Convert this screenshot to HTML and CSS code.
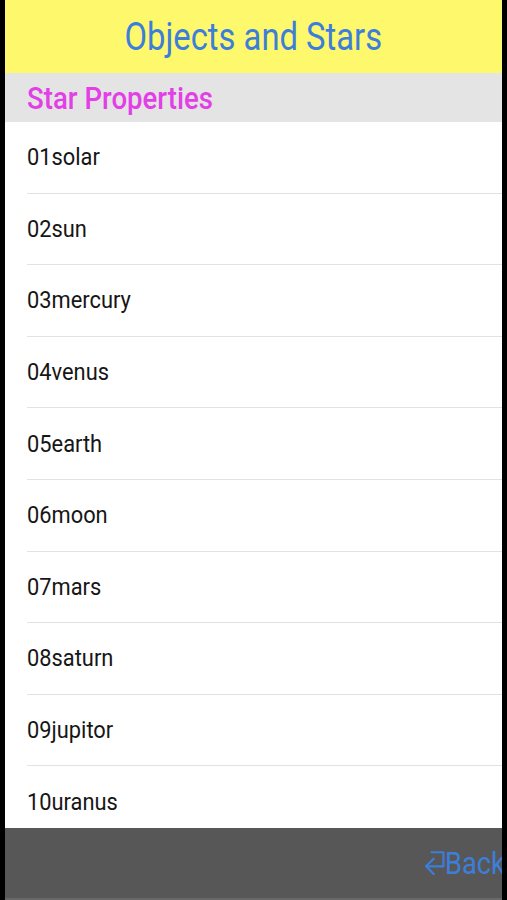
FILE: index.html
```html
<!DOCTYPE html>
<html lang="en">
<head>
    <meta charset="UTF-8">
    <meta name="viewport" content="width=device-width, initial-scale=1.0">
    <title>Objects and Stars</title>
    <link rel="stylesheet" href="styles.css">
</head>
<body>
    <div class="screen">
        <header class="title-bar">
            <h1>Objects and Stars</h1>
        </header>
        <div class="section-header"><span>Star Properties</span></div>
        <ul class="item-list">
            <li><span>01solar</span></li>
            <li><span>02sun</span></li>
            <li><span>03mercury</span></li>
            <li><span>04venus</span></li>
            <li><span>05earth</span></li>
            <li><span>06moon</span></li>
            <li><span>07mars</span></li>
            <li><span>08saturn</span></li>
            <li><span>09jupitor</span></li>
            <li><span>10uranus</span></li>
        </ul>
        <footer class="toolbar">
            <a class="back-btn" href="#">
                <svg class="back-icon" width="26" height="26" viewBox="0 0 24 24" fill="none" stroke="currentColor" stroke-width="2" stroke-linecap="round" stroke-linejoin="round">
                    <path d="M6 3h11v13H1"/>
                    <path d="M8 9L1 16l7 7"/>
                </svg>
                <span>Back</span>
            </a>
        </footer>
    </div>
</body>
</html>
```

FILE: styles.css
```css
body {
    margin: 0;
    background-color: #000;
    font-family: Roboto, "Liberation Sans", sans-serif;
}
.screen {
    width: 497px;
    height: 900px;
    margin-left: 5px;
    background: #fff;
    overflow: hidden;
    display: flex;
    flex-direction: column;
}
.title-bar {
    height: 73px;
    flex-shrink: 0;
    background-color: #fdf86c;
    display: flex;
    justify-content: center;
    align-items: center;
}
.title-bar h1 {
    margin: 0;
    font-size: 39px;
    font-weight: 400;
    color: #3d7edb;
    transform: scaleX(0.84);
}
.section-header {
    height: 49px;
    flex-shrink: 0;
    box-sizing: border-box;
    padding: 3px 0 0 22px;
    background-color: #e4e4e4;
    color: #e23fe6;
    font-size: 31px;
    font-weight: 500;
    line-height: 45px;
}
.section-header span,
.item-list span {
    display: inline-block;
    transform-origin: left center;
    transform: scaleX(0.89);
}
.item-list {
    list-style: none;
    margin: 0;
    padding: 0;
    flex: 1;
    overflow: hidden;
}
.item-list li {
    height: 71.6px;
    box-sizing: border-box;
    margin-left: 22px;
    border-bottom: 1px solid #e2e2e2;
    display: flex;
    align-items: center;
    font-size: 24px;
    color: #161616;
}
.item-list li span {
    transform: scaleX(0.91);
}
.toolbar {
    height: 72px;
    flex-shrink: 0;
    box-sizing: border-box;
    background-color: #575757;
    border-bottom: 2px solid #686868;
    display: flex;
    justify-content: flex-end;
    align-items: center;
}
.back-btn {
    display: flex;
    align-items: center;
    margin-right: -11px;
    color: #3d7edb;
    text-decoration: none;
    font-size: 31px;
}
.back-icon {
    width: 26px;
    height: 26px;
    margin-bottom: 3px;
}
.back-btn span {
    display: inline-block;
    margin-left: -6px;
    transform-origin: left center;
    transform: scaleX(0.88);
}
```
